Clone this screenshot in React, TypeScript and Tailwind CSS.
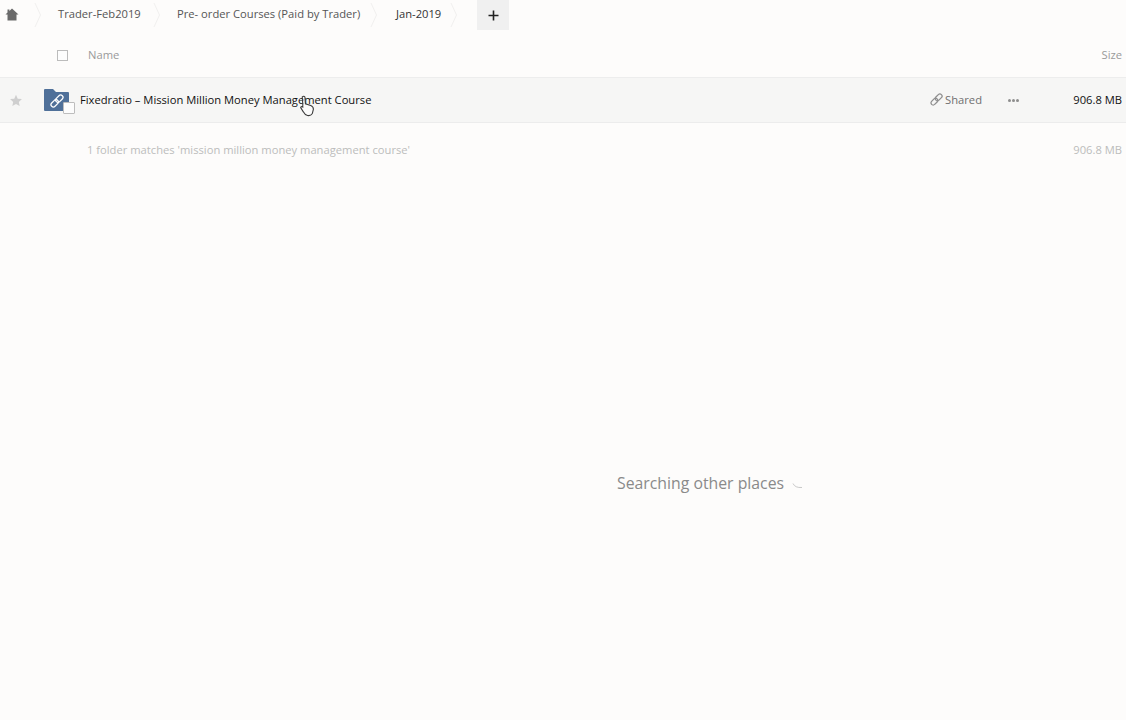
function HomeIcon() {
  return (
    <svg width="14" height="13" viewBox="0 0 14 13" className="shrink-0">
      <path d="M7 0.5 L13.5 6.5 L11.5 6.5 L11.5 12.5 L2.5 12.5 L2.5 6.5 L0.5 6.5 L2.5 4.6 L2.5 1.5 L4.4 1.5 L4.4 2.9 Z" fill="#6a6a6a" />
    </svg>
  );
}

function Chevron() {
  return (
    <svg width="8" height="30" viewBox="0 0 8 30" className="shrink-0">
      <path d="M1 3 L6.5 15 L1 27" fill="none" stroke="#f1f0ef" strokeWidth="1" />
    </svg>
  );
}

function LinkIcon({ color, width, size = 12 }: { color: string; width: number; size?: number }) {
  return (
    <svg width={size} height={size} viewBox="0 0 12 12">
      <g transform="rotate(-45 6 6)" fill="none" stroke={color} strokeWidth={width}>
        <rect x="-0.4" y="4" width="7.2" height="4" rx="2" />
        <rect x="5.2" y="4" width="7.2" height="4" rx="2" />
      </g>
    </svg>
  );
}

function FolderIcon() {
  return (
    <div className="relative w-[32px] h-[26px] shrink-0">
      <svg width="25" height="22" viewBox="0 0 25 22" className="absolute left-0 top-0">
        <path d="M0 1 Q0 0 1 0 L9 0 L12 3 L24 3 Q25 3 25 4 L25 21 Q25 22 24 22 L1 22 Q0 22 0 21 Z" fill="#4f7099" />
      </svg>
      <div className="absolute left-[6px] top-[5px]">
        <LinkIcon color="#ffffff" width={1.1} size={14} />
      </div>
      <div className="absolute left-[19px] top-[13px] w-[12px] h-[12px] bg-[#fcfcfc] border border-[#bdbdbd] rounded-[1px]" />
    </div>
  );
}

function Cursor() {
  return (
    <svg width="17" height="22" viewBox="0 0 16 20" className="absolute left-[298px] top-[95px]">
      <path
        d="M4 1.5 Q5.5 0 6.5 1.5 L7 8 L12 9.5 Q14.5 10.5 14.5 13 L13.5 17 Q12 19.5 9 19 Q6.5 18.5 5 15.5 L2.5 11.5 Q2.5 10 4.5 11 L4.5 8 Z"
        fill="#ffffff"
        fillOpacity="0.55"
        stroke="#3a3a3a"
        strokeWidth="1"
      />
    </svg>
  );
}

export default function App() {
  return (
    <div className="relative w-[1126px] h-[720px] overflow-hidden bg-[#fdfcfb] font-['Open_Sans',sans-serif] text-[11.2px]">
      {/* Breadcrumb */}
      <div className="flex items-start h-[34px]">
        <div className="w-[34px] h-[28px] flex items-center pl-[5px]">
          <HomeIcon />
        </div>
        <Chevron />
        <div className="w-[111px] h-[28px] pl-[16px] flex items-center text-[#555] whitespace-nowrap">Trader-Feb2019</div>
        <Chevron />
        <div className="w-[209px] h-[28px] pl-[16px] flex items-center text-[#555] whitespace-nowrap">Pre- order Courses (Paid by Trader)</div>
        <Chevron />
        <div className="w-[72px] h-[28px] pl-[18px] flex items-center text-[#333] whitespace-nowrap">Jan-2019</div>
        <Chevron />
        <div className="ml-[19px] w-[32px] h-[30px] bg-[#f0f0f0] flex items-center justify-center">
          <svg width="11" height="11" viewBox="0 0 11 11" className="mt-[1px]">
            <path d="M5.5 0.5 V10.5 M0.5 5.5 H10.5" stroke="#222" strokeWidth="1.6" />
          </svg>
        </div>
      </div>

      {/* Table header */}
      <div className="flex items-center h-[44px] border-b border-[#ededed] pr-[4px] text-[#9a9a9a]">
        <div className="ml-[57px] w-[11px] h-[11px] border border-[#bcbcbc] bg-[#fdfdfd]" />
        <span className="ml-[20px] flex-1">Name</span>
        <span>Size</span>
      </div>

      {/* Folder row */}
      <div className="flex items-center h-[45px] bg-[#f6f6f5] border-b border-[#ececec] pr-[4px]">
        <svg width="14" height="13" viewBox="0 0 24 24" className="ml-[9px]">
          <path d="M12 1.5 L15.2 8.6 L23 9.4 L17.2 14.6 L18.8 22.3 L12 18.4 L5.2 22.3 L6.8 14.6 L1 9.4 L8.8 8.6 Z" fill="#cfcfcf" />
        </svg>
        <div className="ml-[21px] mt-[4px]">
          <FolderIcon />
        </div>
        <span className="ml-[4px] text-[#111] flex-1 whitespace-nowrap">Fixedratio – Mission Million Money Management Course</span>
        <span className="flex items-center gap-[2px] text-[#6f6f6f]">
          <LinkIcon color="#8f8f8f" width={1.2} size={13} />
          Shared
        </span>
        <span className="ml-[26px] flex gap-[1px]">
          <i className="w-[3px] h-[3px] rounded-full bg-[#8d8d8d]" />
          <i className="w-[3px] h-[3px] rounded-full bg-[#8d8d8d]" />
          <i className="w-[3px] h-[3px] rounded-full bg-[#8d8d8d]" />
        </span>
        <span className="w-[103px] text-right text-[#111]">906.8 MB</span>
      </div>

      {/* Summary */}
      <div className="flex items-center h-[54px] pl-[87px] pr-[4px] text-[#bcbcbc]">
        <span className="flex-1">1 folder matches 'mission million money management course'</span>
        <span>906.8 MB</span>
      </div>

      {/* Searching status */}
      <div className="flex items-center mt-[295px] ml-[617px] text-[15.8px] text-[#8a8a8a]">
        <span>Searching other places</span>
        <svg width="12" height="12" viewBox="0 0 12 12" className="ml-[8px] mt-[4px]">
          <path d="M1 3.5 Q3 8 10 7.5" fill="none" stroke="#c9c9c9" strokeWidth="1" />
        </svg>
      </div>

      <Cursor />
    </div>
  );
}
